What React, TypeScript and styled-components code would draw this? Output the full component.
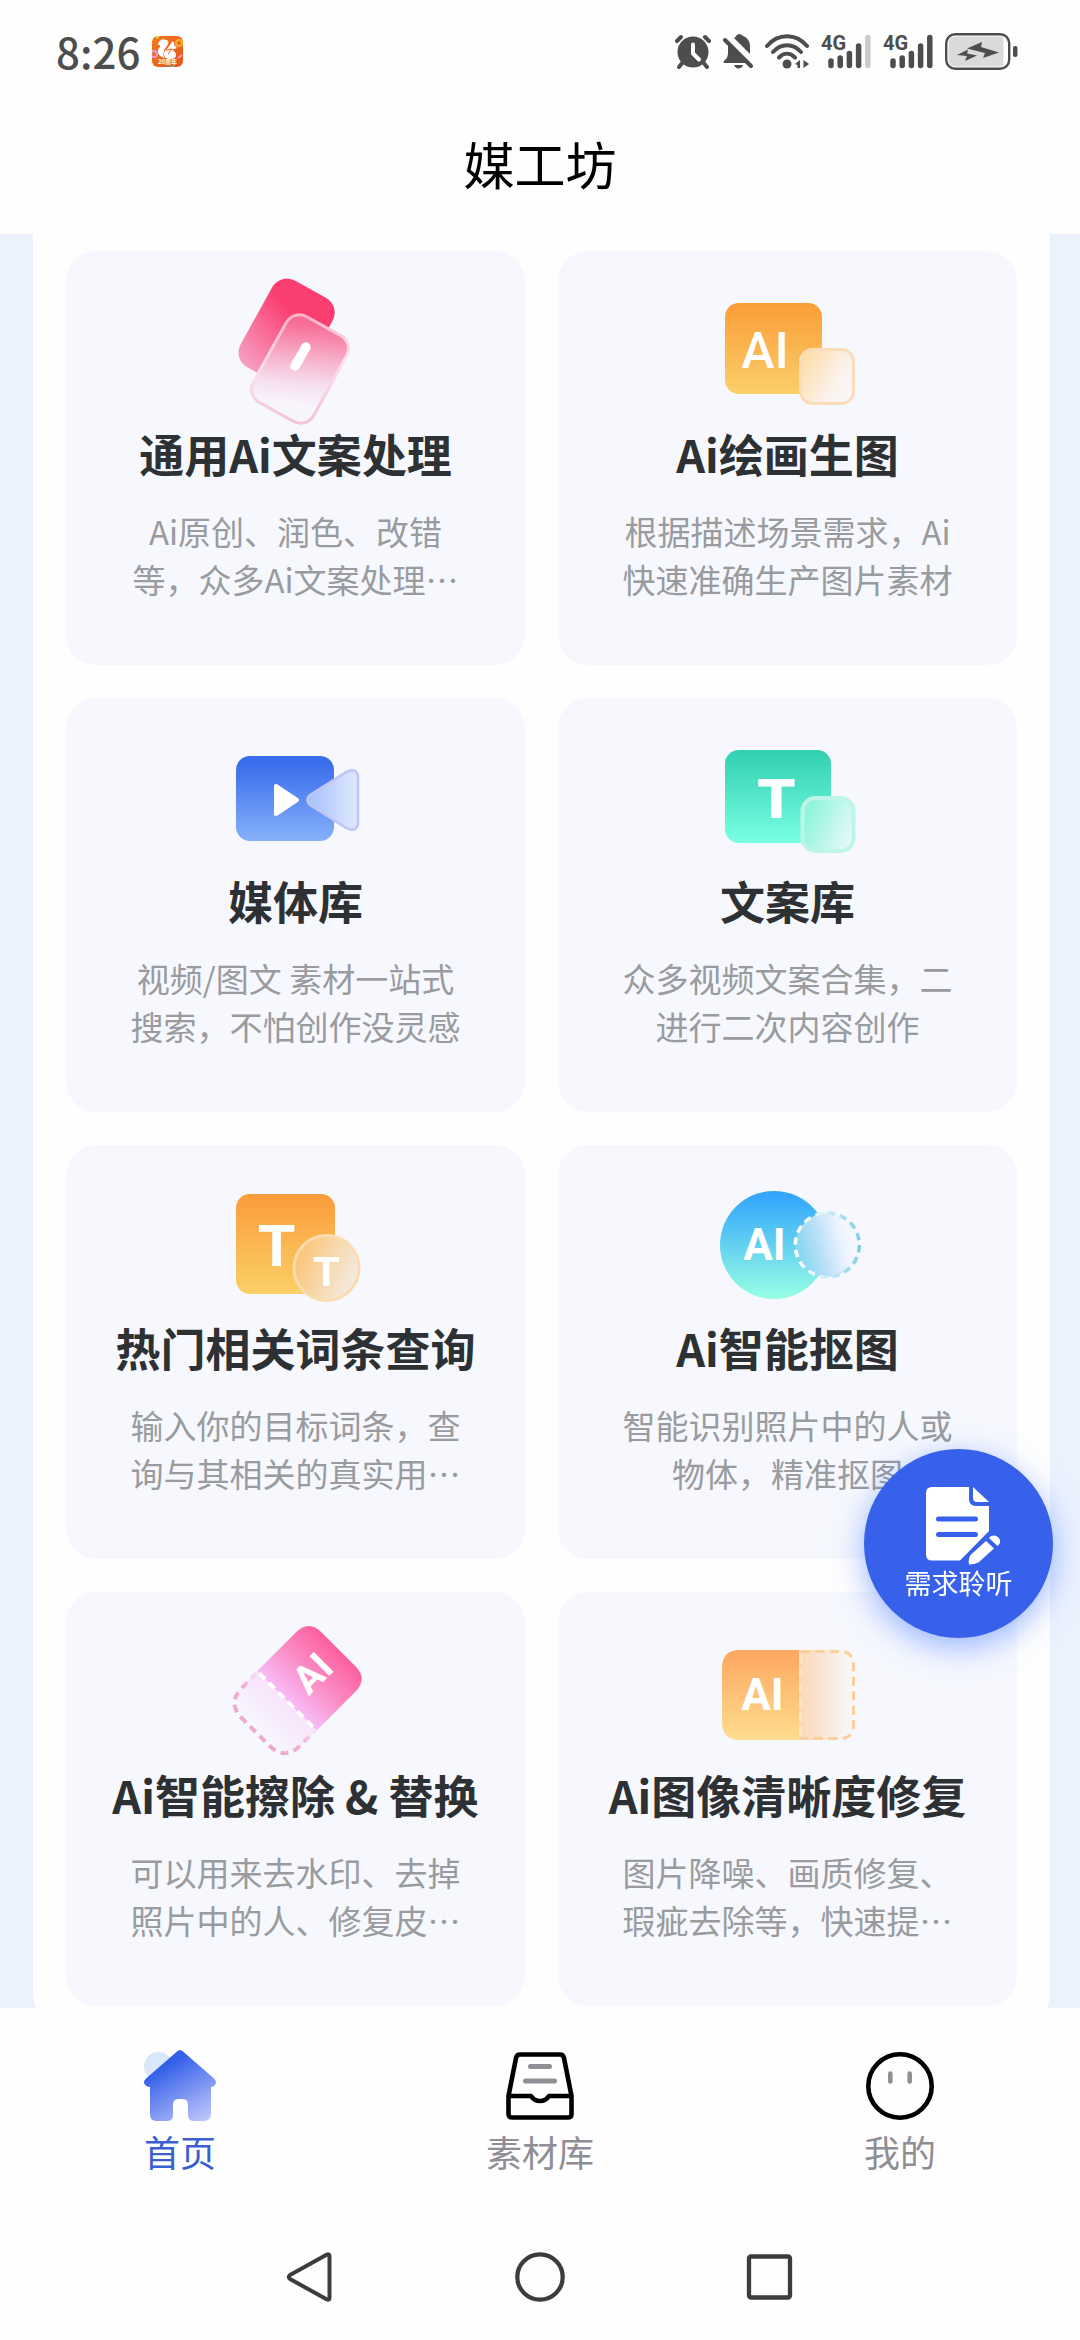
import React from 'react';
import styled, { createGlobalStyle } from 'styled-components';

const GlobalStyle = createGlobalStyle`
  * { box-sizing: border-box; }
  html, body { margin: 0; padding: 0; background: #fefefe; }
  body { font-family: "Noto Sans CJK SC", "Noto Sans", sans-serif; }
  a { color: inherit; text-decoration: none; }
  button { font-family: inherit; border: 0; padding: 0; background: none; cursor: pointer; }
  svg { display: block; flex: none; }
`;

const Page = styled.div`
  display: flex;
  flex-direction: column;
  height: 100vh;
`;

const StatusBar = styled.div`
  display: flex;
  align-items: center;
  justify-content: space-between;
  height: 96px;
  padding: 6px 62px 0 56px;
  color: #4d4d4d;
`;

const StatusGroup = styled.div`
  display: flex;
  align-items: center;
  gap: 12px;
`;

const Clock = styled.time`
  font-size: 42px;
  line-height: 48px;
  font-weight: 500;
`;

const Header = styled.header`
  display: flex;
  align-items: center;
  justify-content: center;
  height: 138px;
  padding-bottom: 4px;
`;

const PageTitle = styled.h1`
  margin: 0;
  font-size: 51px;
  line-height: 60px;
  font-weight: 400;
  color: #000;
`;

const Scroller = styled.main`
  flex: 1;
  min-height: 0;
  overflow: hidden;
  background: #ebf2fe;
`;

const Panel = styled.section`
  margin: 0 30px 0 33px;
  padding: 17px 33px 21px;
  border-radius: 0 0 33px 33px;
  background: #fefefe;
`;

const Grid = styled.div`
  display: grid;
  grid-template-columns: 1fr 1fr;
  gap: 33px;
`;

const Card = styled.a`
  display: flex;
  flex-direction: column;
  align-items: center;
  padding: 24px 0 62px;
  border-radius: 30px;
  background: #f6f8fe;
`;

const CardTitle = styled.h2`
  margin: 0;
  font-size: 45px;
  line-height: 58px;
  font-weight: 700;
  color: #2e3133;
  white-space: nowrap;
`;

const CardText = styled.p`
  width: 332px;
  margin: 24px 0 0;
  font-size: 33px;
  line-height: 48px;
  text-align: center;
  color: #999b9f;
`;

const Fab = styled.button`
  position: fixed;
  right: 27px;
  bottom: 702px;
  display: flex;
  flex-direction: column;
  align-items: center;
  width: 189px;
  height: 189px;
  padding-top: 33px;
  border-radius: 50%;
  background: #3761eb;
  color: #fff;
  box-shadow: 0 9px 30px rgba(60, 115, 255, 0.5);
`;

const FabLabel = styled.span`
  font-size: 27px;
  line-height: 34px;
`;

const TabBar = styled.nav`
  display: grid;
  grid-template-columns: repeat(3, 1fr);
  padding: 42px 0 38px;
`;

const Tab = styled.a<{ $active?: boolean }>`
  display: flex;
  flex-direction: column;
  align-items: center;
  gap: 4px;
  font-size: 36px;
  line-height: 50px;
  color: ${(p) => (p.$active ? '#3c5fd0' : '#8f8d95')};
`;

const SystemNav = styled.nav`
  display: flex;
  align-items: center;
  justify-content: center;
  gap: 180px;
  height: 126px;
`;

const NavButton = styled.button`
  width: 50px;
  height: 50px;
`;

const Letters = styled.text<{ $weight?: number }>`
  font-family: Roboto, "Liberation Sans", sans-serif;
  font-weight: ${(p) => p.$weight ?? 700};
  fill: #fff;
  text-anchor: middle;
`;

const TypeLetter = styled(Letters)`
  font-family: "Liberation Sans", sans-serif;
`;

const WideLetter = styled(Letters)`
  font-family: "DejaVu Sans", sans-serif;
`;

const NetLabel = styled.text`
  font-family: Roboto, "Liberation Sans", sans-serif;
  font-weight: 700;
  fill: #4d4d4d;
`;

/* ---------- status bar drawings ---------- */

const AppBadge = () => (
  <svg width="31" height="31" viewBox="0 0 31 31" aria-hidden="true">
    <defs>
      <clipPath id="badgeClip"><rect width="31" height="31" rx="6" /></clipPath>
      <linearGradient id="badgeBg" x1="0" y1="0" x2="1" y2="1">
        <stop offset="0" stopColor="#f5791f" />
        <stop offset="1" stopColor="#e4561a" />
      </linearGradient>
    </defs>
    <g clipPath="url(#badgeClip)">
      <rect width="31" height="31" fill="url(#badgeBg)" />
      <path d="M3 0h5l-3 3z" fill="#dfe04a" />
      <circle cx="2" cy="18" r="3" fill="none" stroke="#e79bd0" strokeWidth="2" />
      <circle cx="27" cy="7" r="3" fill="none" stroke="#fbb12c" strokeWidth="2" />
      <path d="M26 22l4-3" stroke="#f29bd6" strokeWidth="2" />
      <circle cx="20" cy="32" r="3" fill="#7d9c8a" />
      <path d="M6 8c1-4 5-6 8-4 2 0 3 2 2 4-1 3-4 4-4 8-1 2-1 4 1 6-4-1-7-3-7-7 0-3 3-4 2-6-1 0-2 0-2-1z" fill="#fff" />
      <path d="M15 13l5-7c1-1 2 0 2 1 0 2 1 3 3 5-2 1-4 1-5 2 3 1 4 3 4 5 0 3-3 4-5 4h-3c-3-1-4-3-4-5 0-2 1-4 3-5z" fill="#fff" />
      <path d="M14 14l6-1-4 5" fill="none" stroke="#e8631e" strokeWidth="1" />
      <text x="15.500" y="28" fontSize="6" fontWeight="700" textAnchor="middle" fill="#fff">20周年</text>
    </g>
  </svg>
);

const AlarmIcon = () => (
  <svg width="36" height="35" viewBox="0 0 36 35" aria-label="闹钟">
    <g stroke="#4d4d4d" strokeLinecap="round">
      <path d="M2 7l4-4M34 7l-4-4M8 28l-4 5M28 28l4 5" strokeWidth="4" />
    </g>
    <circle cx="18" cy="18" r="15.500" fill="#4d4d4d" />
    <path d="M18 10.500v9l6 6" fill="none" stroke="#fff" strokeWidth="4" strokeLinecap="round" strokeLinejoin="round" />
  </svg>
);

const MutedBellIcon = () => (
  <svg width="30" height="35" viewBox="0 0 30 35" aria-label="静音">
    <path d="M16 0c2 0 3 1 4 2 5 2 7 6 7 10v8L11 4c1-1 2-1 2-2 1-1 2-2 3-2z" fill="#4d4d4d" />
    <path d="M5 11l18 18H2c-2 0-2-2 0-3 2-2 3-4 3-7z" fill="#4d4d4d" />
    <path d="M2 6l26 26" stroke="#4d4d4d" strokeWidth="4" strokeLinecap="round" />
    <path d="M11 31h9c-1 2-2 3.500-4.500 3.500S12 33 11 31z" fill="#4d4d4d" />
  </svg>
);

const WifiIcon = () => (
  <svg width="44" height="35" viewBox="0 0 44 35" aria-label="无线网络">
    <g fill="none" stroke="#4d4d4d" strokeWidth="4" strokeLinecap="round">
      <path d="M2 12C13-1 31-1 42 12" />
      <path d="M8 18c8-9 20-9 28 0" />
      <path d="M14 23.500c5-5 11-5 16 0" />
    </g>
    <circle cx="22" cy="30" r="4.500" fill="#4d4d4d" />
    <path d="M35 26v8h-2.500v-3L30 30zM38.500 26v8M38.500 26l5.500 4-5.500 4z" fill="#4d4d4d" />
  </svg>
);

const SignalIcon = ({ weak }: { weak?: boolean }) => (
  <svg width="50" height="47" viewBox="0 -6 50 47" aria-label="4G 信号">
    <NetLabel x="0" y="16" fontSize="20">4G</NetLabel>
    <g strokeWidth="5.500" strokeLinecap="round" stroke="#4d4d4d">
      <path d="M10 27v4.500M19.200 24v7.500M28.400 19.500v12M37.600 12v19.500" />
      <path d="M46.800 3.500v28" stroke={weak ? '#cacaca' : '#4d4d4d'} />
    </g>
  </svg>
);

const BatteryIcon = () => (
  <svg width="73" height="37" viewBox="0 0 73 37" aria-label="充电中">
    <rect x="1.200" y="1.200" width="63" height="34.600" rx="9" fill="#fff" stroke="#4d4d4d" strokeWidth="2.400" />
    <path d="M10 3.500h47q1.500 0 1.500 2v26q0 2-1.500 2H10q-6.500 0-6.500-7V10q0-6.500 6.500-6.500z" fill="#dadada" />
    <path d="M12 22l11-5.500-1 4 10 2-12 5.500 2-5zM22 15.500l15-6.500-1 5 18 5.500-16 5.500 2-5z" fill="#4d4d4d" />
    <rect x="68" y="13" width="4.500" height="11" rx="2" fill="#4d4d4d" />
  </svg>
);

/* ---------- card drawings ---------- */

const Art = ({ children }: { children: React.ReactNode }) => (
  <svg width="153" height="150" viewBox="0 0 153 150" aria-hidden="true">{children}</svg>
);

const CopyArt = () => (
  <Art>
    <defs>
      <linearGradient id="copyBack" x1="0.500" y1="0.300" x2="0.350" y2="1">
        <stop offset="0" stopColor="#fb3e70" />
        <stop offset="1" stopColor="#f79cc0" />
      </linearGradient>
      <linearGradient id="copyFront" gradientUnits="userSpaceOnUse" x1="-22" y1="-40" x2="10" y2="34">
        <stop offset="0" stopColor="#f76d97" />
        <stop offset="0.450" stopColor="#f6b5ce" />
        <stop offset="0.750" stopColor="#f6dff0" />
        <stop offset="1" stopColor="#f8f4fc" />
      </linearGradient>
      <linearGradient id="copyEdge" gradientUnits="userSpaceOnUse" x1="-30" y1="-40" x2="30" y2="40">
        <stop offset="0" stopColor="#fbb4c9" />
        <stop offset="0.450" stopColor="#fbe3ee" />
        <stop offset="1" stopColor="#f4c3d9" />
      </linearGradient>
    </defs>
    <rect x="-34.500" y="-49.500" width="69" height="99" rx="17" transform="translate(67.600 57.500) rotate(29)" fill="url(#copyBack)" />
    <rect x="-34.500" y="-49" width="69" height="98" rx="15" transform="translate(81 94) rotate(29)" fill="url(#copyFront)" stroke="url(#copyEdge)" strokeWidth="3" />
    <path d="M87 72L76 91" stroke="#fff" strokeWidth="9.500" strokeLinecap="round" />
  </Art>
);

const PaintArt = () => (
  <Art>
    <defs>
      <linearGradient id="paintBack" x1="0" y1="0" x2="0" y2="1">
        <stop offset="0" stopColor="#fb9d38" />
        <stop offset="1" stopColor="#fbcf6a" />
      </linearGradient>
      <linearGradient id="paintFront" x1="0" y1="0.200" x2="1" y2="0.800">
        <stop offset="0" stopColor="#fcdca4" />
        <stop offset="0.600" stopColor="#fbf0e6" />
        <stop offset="1" stopColor="#faf8fa" />
      </linearGradient>
    </defs>
    <rect x="14" y="28" width="97" height="91" rx="14" fill="url(#paintBack)" />
    <Letters x="54" y="93" fontSize="50" $weight={500}>AI</Letters>
    <rect x="89.500" y="74.500" width="53" height="54" rx="12" fill="url(#paintFront)" stroke="#fbdcba" strokeWidth="3" />
  </Art>
);

const MediaArt = () => (
  <Art>
    <defs>
      <linearGradient id="mediaBack" x1="0" y1="0" x2="0" y2="1">
        <stop offset="0.100" stopColor="#3b6eec" />
        <stop offset="1" stopColor="#86b1fa" />
      </linearGradient>
      <linearGradient id="mediaFront" x1="0" y1="0" x2="1" y2="0">
        <stop offset="0" stopColor="#a5c0fa" />
        <stop offset="1" stopColor="#dfe9fd" />
      </linearGradient>
    </defs>
    <rect x="17" y="34" width="98" height="85" rx="14" fill="url(#mediaBack)" />
    <path d="M57 64v28l21-14z" fill="#fff" stroke="#fff" strokeWidth="4" strokeLinejoin="round" />
    <path d="M91 73q-5 5 0 10l36 23q10 5 12-4V54q-2-9-12-4z" fill="url(#mediaFront)" stroke="#bfc5f7" strokeWidth="2.500" strokeLinejoin="round" />
  </Art>
);

const LibraryArt = () => (
  <Art>
    <defs>
      <linearGradient id="libBack" x1="0" y1="0" x2="0" y2="1">
        <stop offset="0" stopColor="#30cfb0" />
        <stop offset="1" stopColor="#7affe4" />
      </linearGradient>
      <linearGradient id="libFront" x1="0.100" y1="0.300" x2="1" y2="0.700">
        <stop offset="0" stopColor="#90f5dc" />
        <stop offset="1" stopColor="#e6f8f9" />
      </linearGradient>
    </defs>
    <rect x="14" y="28" width="106" height="93" rx="14" fill="url(#libBack)" />
    <WideLetter x="65.500" y="96" fontSize="54">T</WideLetter>
    <rect x="91.500" y="76" width="51" height="53" rx="13" fill="url(#libFront)" stroke="#bff5e9" strokeWidth="4" />
  </Art>
);

const KeywordArt = () => (
  <Art>
    <defs>
      <linearGradient id="wordBack" x1="0" y1="0" x2="0" y2="1">
        <stop offset="0" stopColor="#fa9c3c" />
        <stop offset="1" stopColor="#fbd067" />
      </linearGradient>
      <linearGradient id="wordFront" x1="0" y1="0.300" x2="1" y2="0.700">
        <stop offset="0" stopColor="#fbc472" />
        <stop offset="1" stopColor="#f3ece6" />
      </linearGradient>
    </defs>
    <rect x="17" y="25" width="99" height="100" rx="14" fill="url(#wordBack)" />
    <TypeLetter x="57.500" y="97" fontSize="60">T</TypeLetter>
    <circle cx="107.500" cy="99" r="32.500" fill="url(#wordFront)" stroke="#fcdcae" strokeWidth="3" />
    <TypeLetter x="107.500" y="117" fontSize="43">T</TypeLetter>
  </Art>
);

const CutoutArt = () => (
  <Art>
    <defs>
      <linearGradient id="cutBack" x1="0" y1="0" x2="0" y2="1">
        <stop offset="0.050" stopColor="#34a7fc" />
        <stop offset="1" stopColor="#98ffe4" />
      </linearGradient>
      <linearGradient id="cutFront" x1="0" y1="0.650" x2="1" y2="0.400">
        <stop offset="0" stopColor="#7ed6ee" />
        <stop offset="0.350" stopColor="#b3def7" />
        <stop offset="0.750" stopColor="#eff4fd" />
        <stop offset="1" stopColor="#f6f8fe" />
      </linearGradient>
      <linearGradient id="cutEdge" x1="0" y1="0" x2="1" y2="0">
        <stop offset="0" stopColor="#ffffff" />
        <stop offset="0.400" stopColor="#d8f3fa" />
        <stop offset="1" stopColor="#7fd0e4" />
      </linearGradient>
    </defs>
    <circle cx="63" cy="76" r="54" fill="url(#cutBack)" />
    <Letters x="53.500" y="91" fontSize="44">AI</Letters>
    <circle cx="116.300" cy="76" r="32" fill="url(#cutFront)" />
    <circle cx="116.300" cy="76" r="32" fill="none" stroke="url(#cutEdge)" strokeWidth="3.500" strokeDasharray="7.500 5.067" />
  </Art>
);

const EraserArt = () => (
  <Art>
    <defs>
      <linearGradient id="eraserTop" x1="0.500" y1="0" x2="0.500" y2="1">
        <stop offset="0" stopColor="#fc5f9f" />
        <stop offset="0.500" stopColor="#fb8cc4" />
        <stop offset="1" stopColor="#f7bdf8" />
      </linearGradient>
      <linearGradient id="eraserBottom" x1="0.500" y1="0" x2="0.500" y2="1">
        <stop offset="0" stopColor="#f9e2fb" />
        <stop offset="1" stopColor="#f6f8fe" />
      </linearGradient>
      <linearGradient id="eraserEdge" gradientUnits="userSpaceOnUse" x1="0" y1="14" x2="0" y2="58">
        <stop offset="0" stopColor="#f9e2fb" />
        <stop offset="0.450" stopColor="#f1b0d2" />
        <stop offset="1" stopColor="#efaacd" />
      </linearGradient>
    </defs>
    <g transform="translate(77.700 75) rotate(45)">
      <path d="M-42 14v-55q0-18 18-18h48q18 0 18 18v55z" fill="url(#eraserTop)" />
      <path d="M-42 14h84v22q0 23-23 23h-38q-23 0-23-23z" fill="url(#eraserBottom)" />
      <path d="M-41 15v21q0 22 22 22h38q22 0 22-22V15" fill="none" stroke="url(#eraserEdge)" strokeWidth="4" strokeDasharray="8 5.500" />
      <path d="M-39 14h79" stroke="#fff" strokeWidth="4" strokeDasharray="8 5.500" />
    </g>
    <Letters fontSize="39" transform="translate(103 67) rotate(-45)">AI</Letters>
  </Art>
);

const SharpenArt = () => (
  <Art>
    <defs>
      <linearGradient id="sharpBack" x1="0" y1="0" x2="0" y2="1">
        <stop offset="0.050" stopColor="#fda962" />
        <stop offset="1" stopColor="#fedd90" />
      </linearGradient>
      <linearGradient id="sharpFront" x1="0" y1="0" x2="1" y2="0">
        <stop offset="0" stopColor="#fcd8b4" />
        <stop offset="0.600" stopColor="#f9ece2" />
        <stop offset="1" stopColor="#f8f8fc" />
      </linearGradient>
    </defs>
    <path d="M88 34H29q-18 0-18 18v54q0 18 18 18h59z" fill="url(#sharpBack)" />
    <path d="M88 34h41q15 0 15 15v60q0 15-15 15H88z" fill="url(#sharpFront)" />
    <path d="M90 35.500h39q13.500 0 13.500 14v59q0 14-13.500 14H90" fill="none" stroke="#f9cf9c" strokeWidth="3" strokeDasharray="9 5.500" />
    <path d="M89.500 38v84" stroke="#fde6c2" strokeWidth="3" strokeDasharray="9 5.500" />
    <Letters x="51.500" y="94" fontSize="44">AI</Letters>
  </Art>
);

/* ---------- floating button and tab drawings ---------- */

const RequestIcon = () => (
  <svg width="87" height="84" viewBox="0 0 87 84" aria-hidden="true">
    <path d="M17 5h37v12q0 7 7 7h13v25L45 78.500H17q-6 0-6-6V11q0-6 6-6z" fill="#fff" />
    <path d="M58 5l16 15H62q-4 0-4-4z" fill="#fff" />
    <path d="M23.500 37h37M23.500 52.500h37" stroke="#3761eb" strokeWidth="5" strokeLinecap="round" />
    <path d="M54 82.500q-1-5 1.500-9.500L71 59l8 7.500-15.500 14q-4.500 2-9.500 2z" fill="#fff" />
    <path d="M74 56l1.500-1.500q4.500-2.500 8 1 3 3.500.5 7L82.500 64z" fill="#fff" />
  </svg>
);

const HomeIcon = () => (
  <svg width="72" height="72" viewBox="0 0 72 72" aria-hidden="true">
    <defs>
      <linearGradient id="homeFill" x1="0.300" y1="0.100" x2="0.850" y2="1">
        <stop offset="0.100" stopColor="#3460e8" />
        <stop offset="0.600" stopColor="#8299f3" />
        <stop offset="1" stopColor="#bfc5fa" />
      </linearGradient>
    </defs>
    <circle cx="14.500" cy="16.500" r="14.500" fill="#d9e7fa" />
    <path d="M33 1.500q3-3 6 0l31 27q3 3 1.500 5.500-1 3-4.500 3v27q0 7-7 7H50q-6 0-6-6V55q0-6-5-6h-5q-5 0-5 6v10q0 6-6 6H12q-6 0-6-7V37q-4 0-5.500-3Q-1 31 2 28.500z" fill="url(#homeFill)" />
  </svg>
);

const ArchiveIcon = () => (
  <svg width="72" height="72" viewBox="0 0 72 72" aria-hidden="true">
    <g fill="none" stroke="#000" strokeWidth="4.600" strokeLinejoin="round" strokeLinecap="round">
      <path d="M4.500 46L12 8q.8-3.500 4-3.500h40q3.200 0 4 3.500l7.500 38v18q0 3.500-3.500 3.500H8q-3.500 0-3.500-3.500z" />
      <path d="M5 46h22c2 3 5 5 9 5s7-2 9-5h22" />
    </g>
    <path d="M26.500 16.500h19M21.500 31h29" stroke="#8f8f95" strokeWidth="5" strokeLinecap="round" />
  </svg>
);

const FaceIcon = () => (
  <svg width="72" height="72" viewBox="0 0 72 72" aria-hidden="true">
    <circle cx="36" cy="36" r="31.700" fill="none" stroke="#000" strokeWidth="4.600" />
    <path d="M26.300 23.500v8M45.700 23.500v8" stroke="#8f8f95" strokeWidth="4.600" strokeLinecap="round" />
  </svg>
);

const features = [
  { title: '通用Ai文案处理', text: 'Ai原创、润色、改错等，众多Ai文案处理…', art: <CopyArt /> },
  { title: 'Ai绘画生图', text: '根据描述场景需求，Ai快速准确生产图片素材', art: <PaintArt /> },
  { title: '媒体库', text: '视频/图文 素材一站式搜索，不怕创作没灵感', art: <MediaArt /> },
  { title: '文案库', text: '众多视频文案合集，二进行二次内容创作', art: <LibraryArt /> },
  { title: '热门相关词条查询', text: '输入你的目标词条，查询与其相关的真实用…', art: <KeywordArt /> },
  { title: 'Ai智能抠图', text: '智能识别照片中的人或物体，精准抠图', art: <CutoutArt /> },
  { title: 'Ai智能擦除 & 替换', text: '可以用来去水印、去掉照片中的人、修复皮…', art: <EraserArt /> },
  { title: 'Ai图像清晰度修复', text: '图片降噪、画质修复、瑕疵去除等，快速提…', art: <SharpenArt /> },
];

export default function App() {
  return (
    <Page lang="zh-CN">
      <GlobalStyle />
      <StatusBar>
        <StatusGroup>
          <Clock>8:26</Clock>
          <AppBadge />
        </StatusGroup>
        <StatusGroup>
          <AlarmIcon />
          <MutedBellIcon />
          <WifiIcon />
          <SignalIcon weak />
          <SignalIcon />
          <BatteryIcon />
        </StatusGroup>
      </StatusBar>
      <Header>
        <PageTitle>媒工坊</PageTitle>
      </Header>
      <Scroller>
        <Panel>
          <Grid>
            {features.map((f) => (
              <Card href="#" key={f.title}>
                {f.art}
                <CardTitle>{f.title}</CardTitle>
                <CardText>{f.text}</CardText>
              </Card>
            ))}
          </Grid>
        </Panel>
      </Scroller>
      <Fab type="button">
        <RequestIcon />
        <FabLabel>需求聆听</FabLabel>
      </Fab>
      <TabBar>
        <Tab href="#" $active>
          <HomeIcon />
          首页
        </Tab>
        <Tab href="#">
          <ArchiveIcon />
          素材库
        </Tab>
        <Tab href="#">
          <FaceIcon />
          我的
        </Tab>
      </TabBar>
      <SystemNav>
        <NavButton type="button" aria-label="返回">
          <svg width="50" height="50" viewBox="0 0 50 50">
            <path d="M5 23L42 2.500q2.500-1 2.500 2v41q0 3-2.500 2L5 27q-2.500-2 0-4z" fill="none" stroke="#3c3c3c" strokeWidth="4" strokeLinejoin="round" />
          </svg>
        </NavButton>
        <NavButton type="button" aria-label="主屏幕">
          <svg width="50" height="50" viewBox="0 0 50 50">
            <circle cx="25" cy="25" r="22.700" fill="none" stroke="#3c3c3c" strokeWidth="4.300" />
          </svg>
        </NavButton>
        <NavButton type="button" aria-label="最近任务">
          <svg width="50" height="50" viewBox="0 0 50 50">
            <rect x="4" y="4.500" width="41" height="41" rx="2" fill="none" stroke="#3c3c3c" strokeWidth="4.300" />
          </svg>
        </NavButton>
      </SystemNav>
    </Page>
  );
}
